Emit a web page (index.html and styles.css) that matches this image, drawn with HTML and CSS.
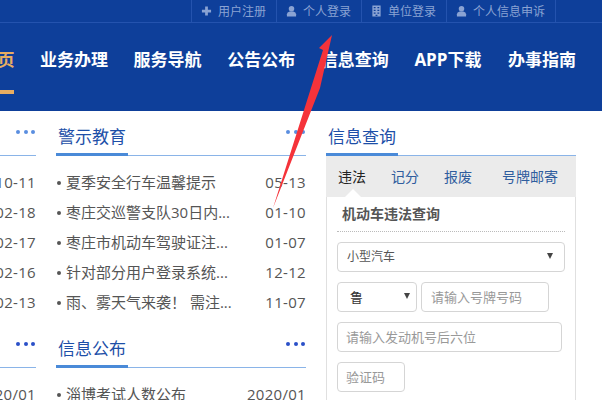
FILE: index.html
```html
<!DOCTYPE html>
<html lang="zh-CN">
<head>
    <meta charset="UTF-8">
    <title>交通安全综合服务管理平台</title>
    <link rel="stylesheet" href="styles.css">
</head>
<body>
    <header class="header">
        <div class="topbar">
            <a class="top-link"><svg class="top-icon" viewBox="0 0 12 12"><path d="M4.500 1h3v3.500H11v3H7.500V11h-3V7.500H1v-3h3.500z"/></svg>用户注册</a>
            <a class="top-link"><svg class="top-icon" viewBox="0 0 12 12"><circle cx="6" cy="3.500" r="3"/><path d="M1 12V9.500Q1 7 4 6.500h4q3 .5 3 3V12z"/></svg>个人登录</a>
            <a class="top-link"><svg class="top-icon" viewBox="0 0 12 12"><path fill-rule="evenodd" d="M1.500 0h9v12h-9zM3 1.500v1.500h2V1.500zM7 1.500v1.500h2V1.500zM3 4.500V6h2V4.500zM7 4.500V6h2V4.500zM3 7.500V9h2V7.500zM7 7.500V9h2V7.500zM5 10v1.500h2V10z"/></svg>单位登录</a>
            <a class="top-link"><svg class="top-icon" viewBox="0 0 12 12"><circle cx="6" cy="3.500" r="3"/><path d="M1 12V9.500Q1 7 4 6.500h4q3 .5 3 3V12z"/></svg>个人信息申诉</a>
        </div>
        <nav class="nav">
            <a class="nav-item active">首页</a>
            <a class="nav-item">业务办理</a>
            <a class="nav-item">服务导航</a>
            <a class="nav-item">公告公布</a>
            <a class="nav-item">信息查询</a>
            <a class="nav-item">APP下载</a>
            <a class="nav-item">办事指南</a>
        </nav>
    </header>

    <main class="content">
        <div class="column">
            <section class="section">
                <div class="section-head">
                    <h2 class="section-title"></h2>
                    <span class="more"><i></i><i></i><i></i></span>
                </div>
                <ul class="list">
                    <li><span class="date">10-11</span></li>
                    <li><span class="date">02-18</span></li>
                    <li><span class="date">02-17</span></li>
                    <li><span class="date">02-16</span></li>
                    <li><span class="date">02-13</span></li>
                </ul>
            </section>
            <section class="section">
                <div class="section-head">
                    <h2 class="section-title"></h2>
                    <span class="more dark"><i></i><i></i><i></i></span>
                </div>
                <ul class="list">
                    <li><span class="date">2020/01</span></li>
                </ul>
            </section>
        </div>

        <div class="column">
            <section class="section">
                <div class="section-head">
                    <h2 class="section-title">警示教育</h2>
                    <span class="more"><i></i><i></i><i></i></span>
                </div>
                <ul class="list">
                    <li><span class="item">夏季安全行车温馨提示</span><span class="date">05-13</span></li>
                    <li><span class="item">枣庄交巡警支队30日内...</span><span class="date">01-10</span></li>
                    <li><span class="item">枣庄市机动车驾驶证注...</span><span class="date">01-07</span></li>
                    <li><span class="item">针对部分用户登录系统...</span><span class="date">12-12</span></li>
                    <li><span class="item">雨、雾天气来袭！ 需注...</span><span class="date">11-07</span></li>
                </ul>
            </section>
            <section class="section">
                <div class="section-head">
                    <h2 class="section-title">信息公布</h2>
                    <span class="more dark"><i></i><i></i><i></i></span>
                </div>
                <ul class="list">
                    <li><span class="item">淄博考试人数公布</span><span class="date">2020/01</span></li>
                </ul>
            </section>
        </div>

        <div class="column">
            <div class="section-head">
                <h2 class="section-title">信息查询</h2>
            </div>
            <div class="tabs">
                <a class="tab active">违法</a>
                <a class="tab">记分</a>
                <a class="tab">报废</a>
                <a class="tab wide">号牌邮寄</a>
            </div>
            <form class="query">
                <h3 class="query-title">机动车违法查询</h3>
                <div class="field select full">小型汽车</div>
                <div class="field-row">
                    <div class="field select province">鲁</div>
                    <input class="field plate" placeholder="请输入号牌号码">
                </div>
                <input class="field engine" placeholder="请输入发动机号后六位">
                <input class="field code" placeholder="验证码">
            </form>
        </div>
    </main>

    <svg class="arrow" width="602" height="400" viewBox="0 0 602 400">
        <path d="M332 35 L319 48 L323 50 L273 208 L320 88z"/>
    </svg>
</body>
</html>
```

FILE: styles.css
```css
* {
    box-sizing: border-box;
}
html, body {
    height: 400px;
}
body {
    margin: 0;
    overflow: hidden;
    position: relative;
    background-color: #fff;
    font-family: "Open Sans", "Noto Sans CJK SC", sans-serif;
    color: #555;
}
.header {
    height: 111px;
    background-color: #0e3f9a;
}
.topbar {
    display: flex;
    height: 23px;
    padding-left: 191px;
    border-bottom: 1px solid #2453ae;
}
.top-link {
    display: flex;
    align-items: center;
    gap: 6px;
    height: 22px;
    padding: 0 10px 0 9px;
    border-left: 1px solid #2453ae;
    font-size: 12px;
    color: #8aa3d3;
}
.top-link:last-child {
    border-right: 1px solid #2453ae;
}
.top-icon {
    width: 11px;
    height: 12px;
    fill: #8aa3d3;
}
.nav {
    display: flex;
    gap: 25.600px;
    margin-left: -19.600px;
}
.nav-item {
    min-width: 68px;
    height: 71px;
    padding-top: 24px;
    font-size: 17px;
    line-height: 26px;
    font-weight: 700;
    color: #fff;
}
.nav-item.active {
    min-width: 34px;
    color: #e8ad62;
    border-bottom: 4px solid #e8ad62;
}
.content {
    display: flex;
    gap: 20px;
    height: 289px;
    margin-left: -214px;
    overflow: hidden;
}
.column {
    flex: none;
    width: 250px;
}
.section-head {
    display: flex;
    justify-content: space-between;
    align-items: center;
    height: 45px;
    border-bottom: 1px solid #8ab4e8;
}
.section-title {
    margin: 0;
    height: 45px;
    min-width: 72px;
    padding: 12px 2px 0;
    border-bottom: 3px solid #4a8ad8;
    font-size: 17px;
    line-height: 28px;
    font-weight: 400;
    color: #1d4fa8;
}
.section {
    margin-bottom: 6px;
}
.more {
    display: flex;
    gap: 3.500px;
    margin: 0 1px 2px 0;
}
.more i {
    width: 4px;
    height: 4px;
    border-radius: 50%;
    background-color: #5a8ee0;
}
.more.dark i {
    background-color: #2b50c8;
}
.list {
    margin: 0;
    padding: 11px 0 0;
    list-style: none;
    font-size: 15px;
}
.list li {
    display: flex;
    justify-content: space-between;
    height: 30px;
    line-height: 30px;
}
.list .date {
    margin-left: auto;
    letter-spacing: .3px;
}
.item {
    position: relative;
    padding-left: 10px;
    white-space: nowrap;
}
.item::before {
    content: "";
    position: absolute;
    left: 1px;
    top: 14px;
    width: 4px;
    height: 4px;
    border-radius: 50%;
    background-color: #555;
}
.tabs {
    display: flex;
    height: 41px;
    padding: 10px 0 0 12px;
    background-color: #ebebeb;
    font-size: 14px;
    line-height: 22px;
    color: #2f5d9e;
}
.tab {
    position: relative;
    width: 53px;
}
.tab.wide {
    margin-left: 5px;
    width: 56px;
}
.tab.active {
    color: #222;
}
.tab.active::after {
    content: "";
    position: absolute;
    left: 7px;
    top: 23px;
    border: 8px solid transparent;
    border-top: 0;
    border-bottom-color: #fff;
}
.query {
    height: 203px;
    padding: 7px 10px 0;
    border: 1px solid #e0e0e0;
    border-width: 0 1px;
}
.query-title {
    margin: 0 0 10px;
    padding: 0 5px;
    height: 28px;
    border-bottom: 1px dotted #bbb;
    font-size: 14px;
    line-height: 20px;
    font-weight: 700;
    color: #555;
}
.field {
    display: block;
    height: 30px;
    padding: 0 8px;
    border: 1px solid #d5d5d5;
    border-radius: 4px;
    background-color: #fff;
    font-family: inherit;
    font-size: 13px;
    line-height: 28px;
    color: #555;
    outline: none;
}
.field::placeholder {
    color: #999;
}
.select {
    position: relative;
    padding-left: 9px;
    font-size: 12px;
}
.select::after {
    content: "";
    position: absolute;
    right: 11px;
    top: 10px;
    border: 3px solid transparent;
    border-top: 6px solid #444;
    border-bottom: 0;
}
.full {
    width: 228px;
}
.field-row {
    display: flex;
    gap: 4px;
    margin-top: 10px;
}
.province {
    width: 80px;
    padding-left: 12px;
    font-size: 13px;
    color: #333;
}
.province::after {
    right: 6px;
}
.plate {
    width: 128px;
    padding-left: 9px;
}
.engine {
    width: 225px;
    margin-top: 10px;
}
.code {
    width: 68px;
    margin-top: 10px;
}
.arrow {
    position: absolute;
    left: 0;
    top: 0;
    pointer-events: none;
}
.arrow path {
    fill: #f5333a;
}
```
